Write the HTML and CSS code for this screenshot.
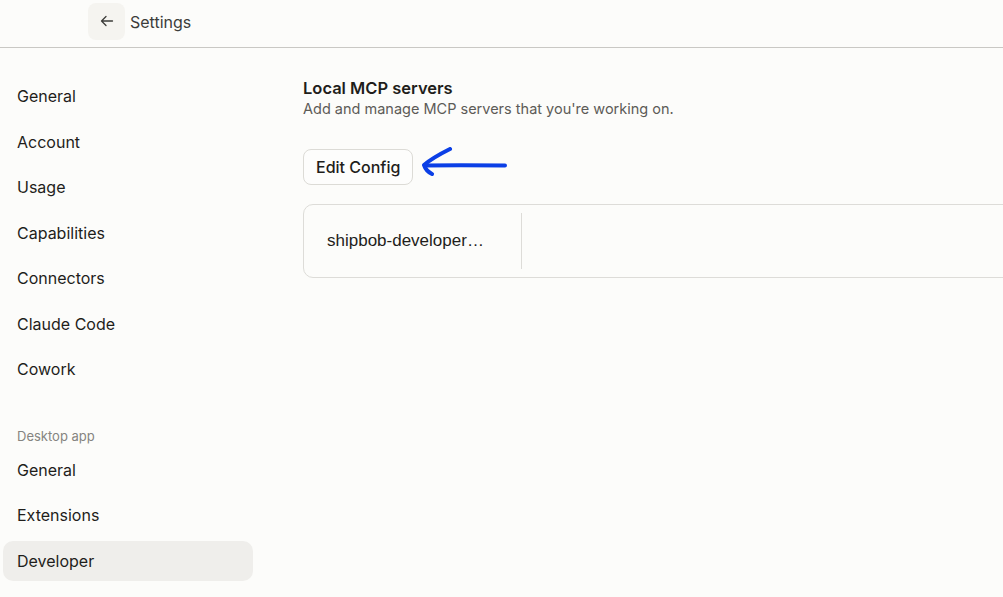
FILE: index.html
```html
<!DOCTYPE html>
<html lang="en">
<head>
    <meta charset="UTF-8">
    <meta name="viewport" content="width=device-width, initial-scale=1.0">
    <title>Settings</title>
    <link rel="stylesheet" href="styles.css">
</head>
<body>
    <header class="topbar">
        <button class="back-btn" aria-label="Back">
            <svg width="14" height="14" viewBox="0 0 14 14" fill="none" stroke="#3d3d3a" stroke-width="1.3" stroke-linecap="round" stroke-linejoin="round">
                <path d="M12.5 7H1.5M6 2.5L1.5 7L6 11.5"/>
            </svg>
        </button>
        <span class="topbar-title">Settings</span>
    </header>

    <div class="layout">
        <nav class="sidebar">
            <a class="nav-item">General</a>
            <a class="nav-item">Account</a>
            <a class="nav-item">Usage</a>
            <a class="nav-item">Capabilities</a>
            <a class="nav-item">Connectors</a>
            <a class="nav-item">Claude Code</a>
            <a class="nav-item">Cowork</a>

            <div class="nav-heading">Desktop app</div>
            <a class="nav-item">General</a>
            <a class="nav-item">Extensions</a>
            <a class="nav-item active">Developer</a>
        </nav>

        <main class="content">
            <h2 class="section-title">Local MCP servers</h2>
            <p class="section-sub">Add and manage MCP servers that you're working on.</p>

            <div class="actions">
                <button class="btn">Edit Config</button>
                <!-- hand drawn pointer -->
                <svg class="pointer" width="90" height="34" viewBox="0 0 90 34" fill="none" stroke="#0b3fe6" stroke-width="4" stroke-linecap="round" stroke-linejoin="round">
                    <path d="M5 18.5C30 18.2 60 18.3 85 18.5"/>
                    <path d="M30 2C20 7 11 12 4 18C5 21 8 25 12 27"/>
                </svg>
            </div>

            <div class="server-card">
                <div class="server-name">shipbob-developer…</div>
                <div class="server-detail"></div>
            </div>
        </main>
    </div>
</body>
</html>
```

FILE: styles.css
```css
html, body {
    margin: 0;
    height: 100%;
}
body {
    background-color: #fcfcfa;
    color: #1f1e1b;
    font-family: "Inter", "Noto Sans", sans-serif;
    overflow: hidden;
}

.topbar {
    height: 48px;
    display: flex;
    align-items: center;
    padding-left: 88px;
    border-bottom: 1px solid #c9c8c4;
    box-sizing: border-box;
}
.back-btn {
    width: 37px;
    height: 37px;
    margin-top: -5px;
    display: flex;
    align-items: center;
    justify-content: center;
    background-color: #f5f4f0;
    border: none;
    border-radius: 8px;
    padding: 0;
}
.topbar-title {
    margin-left: 5px;
    margin-top: -4px;
    font-size: 16px;
    color: #3d3d3a;
}

.layout {
    display: flex;
}

/* left column with page links */
.sidebar {
    width: 250px;
    padding: 28px 0 0 3px;
    display: flex;
    flex-direction: column;
}
.nav-item {
    display: block;
    height: 40px;
    line-height: 40px;
    margin-bottom: 5.5px;
    padding-left: 14px;
    font-size: 16px;
    color: #1f1e1b;
    border-radius: 10px;
}
.nav-item.active {
    background-color: #efeeeb;
}
.nav-heading {
    margin-top: 30px;
    padding-left: 14px;
    font-size: 13px;
    color: #858480;
    height: 22px;
    line-height: 22px;
    margin-bottom: 3px;
}

.content {
    flex: 1;
    padding: 29px 0 0 50px;
}
.section-title {
    margin: 0;
    font-size: 16.5px;
    font-weight: 600;
    line-height: 22px;
}
.section-sub {
    margin: 0;
    font-size: 14.5px;
    line-height: 20px;
    color: #5c5b57;
}

.actions {
    display: flex;
    align-items: center;
    margin-top: 30px;
}
.btn {
    height: 36px;
    padding: 0 12px;
    font-family: inherit;
    font-size: 16px;
    font-weight: 500;
    color: #1f1e1b;
    background-color: #fdfdfc;
    border: 1px solid #dcdbd6;
    border-radius: 8px;
}
.pointer {
    margin-left: 7px;
    margin-top: -6px;
}

.server-card {
    margin-top: 19px;
    margin-right: -20px;
    height: 74px;
    display: flex;
    align-items: center;
    border: 1px solid #dddcd8;
    border-radius: 10px;
    box-sizing: border-box;
}
.server-name {
    width: 194px;
    padding-left: 23px;
    font-family: "Liberation Sans", Arial, sans-serif;
    font-size: 17px;
    color: #1f1e1b;
}
.server-detail {
    align-self: stretch;
    margin: 8px 0;
    flex: 1;
    border-left: 1px solid #dddcd8;
}
```
